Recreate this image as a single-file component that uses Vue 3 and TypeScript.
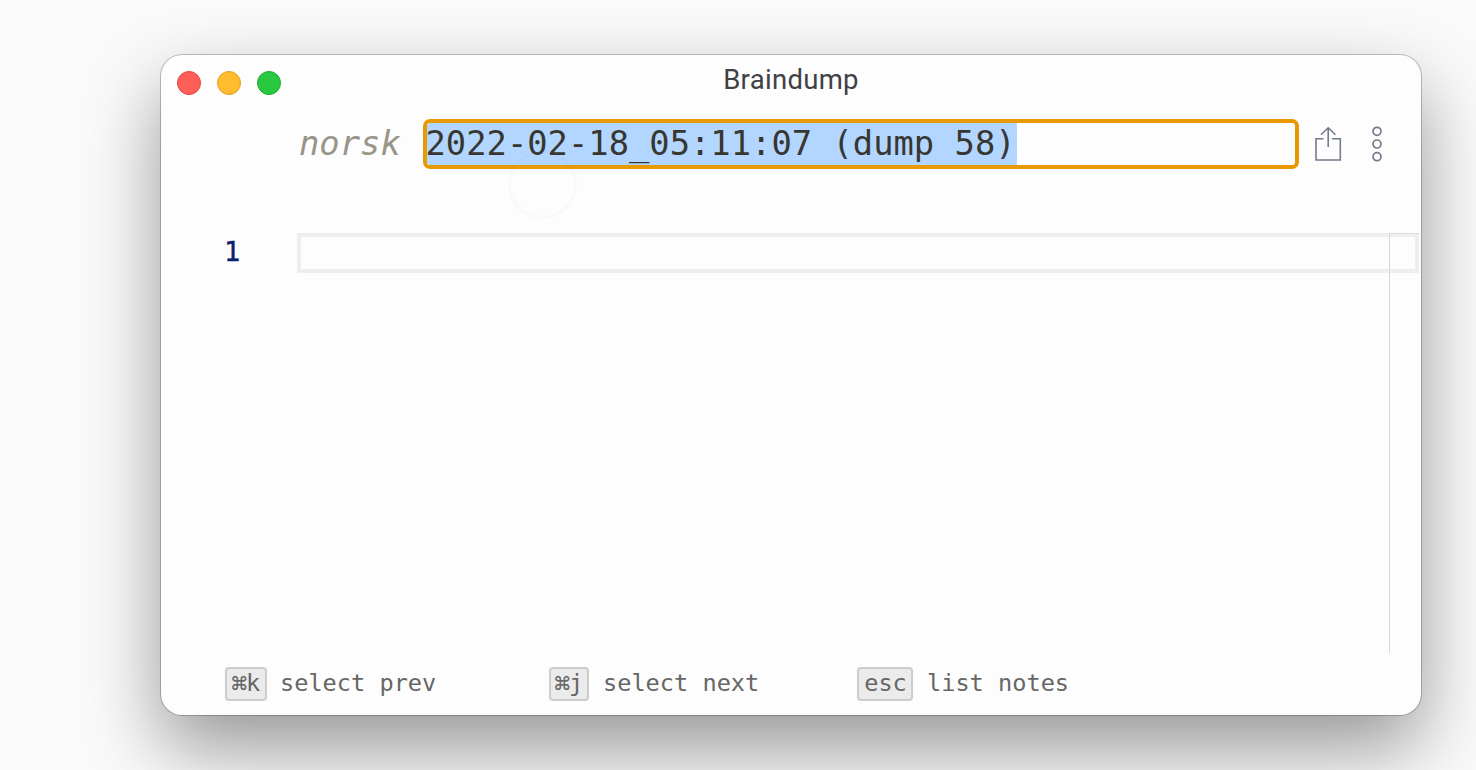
<script setup lang="ts">
interface Hint {
  symbol: string
  key: string
  label: string
  id: string
}

const lights: string[] = ['close', 'minimize', 'zoom']
const title = 'Braindump'
const language = 'norsk'
const noteName = '2022-02-18_05:11:07 (dump 58)'
const hints: Hint[] = [
  { symbol: '⌘', key: 'k', label: 'select prev', id: 'prev' },
  { symbol: '⌘', key: 'j', label: 'select next', id: 'next' },
  { symbol: '', key: 'esc', label: 'list notes', id: 'list' },
]
</script>

<template>
  <div class="desktop">
    <main class="window">
      <header class="titlebar">
        <div class="lights">
          <span v-for="light in lights" :key="light" class="light" :class="light" />
        </div>
        <h1 class="title"><span>{{ title }}</span></h1>
      </header>

      <section class="namebar">
        <span class="language">{{ language }}</span>
        <div class="name-field"><span class="selection">{{ noteName }}</span></div>
        <svg class="share" width="30" height="38" viewBox="0 0 30 38" fill="none" stroke="#747b8b" stroke-width="1.6">
          <path d="M10.6 13.8H3V35H27.3V13.8H18.9M15.2 22V3M8 9.8L15.2 2.8L22.4 9.8" />
        </svg>
        <svg class="more" width="14" height="38" viewBox="0 0 14 38" fill="none" stroke="#747b8b" stroke-width="1.7">
          <circle cx="7" cy="6.3" r="4" />
          <circle cx="7" cy="19" r="4" />
          <circle cx="7" cy="31.7" r="4" />
        </svg>
        <span class="ripple" />
      </section>

      <section class="editor">
        <div class="gutter">1</div>
        <div class="code">
          <div class="active-line" />
          <div class="overview" />
        </div>
      </section>

      <footer class="hints">
        <div v-for="hint in hints" :key="hint.id" class="hint" :class="hint.id">
          <kbd><span v-if="hint.symbol" class="symbol">{{ hint.symbol }}</span><span class="key">{{ hint.key }}</span></kbd>
          <span class="label">{{ hint.label }}</span>
        </div>
      </footer>
    </main>
  </div>
</template>

<style>
body {
  margin: 0;
  background: #fafafa;
}
</style>

<style scoped>
.desktop {
  box-sizing: border-box;
  width: 1476px;
  height: 770px;
  padding: 55px 0 0 161px;
  overflow: hidden;
  background: #fafafa;
  font-family: 'DejaVu Sans Mono', monospace;
}
.window {
  display: flex;
  flex-direction: column;
  width: 1260px;
  height: 660px;
  border-radius: 21px;
  background: #fdfdfd;
  box-shadow: 0 0 0 1px rgba(0, 0, 0, 0.22), 0 33px 76px rgba(0, 0, 0, 0.4);
}
.titlebar {
  display: grid;
  grid-template-columns: 120px 1fr 120px;
  height: 64px;
}
.lights {
  display: flex;
  gap: 16px;
  padding: 16px 0 0 16px;
}
.light {
  box-sizing: border-box;
  width: 24px;
  height: 24px;
  border-radius: 50%;
}
.close {
  background: #ff5f57;
  border: 1px solid #e2463f;
}
.minimize {
  background: #febc2e;
  border: 1px solid #dfa023;
}
.zoom {
  background: #28c840;
  border: 1px solid #1dac2b;
}
.title {
  margin: 0;
  padding-top: 9px;
  text-align: center;
  font: 400 27.5px/32px Roboto, sans-serif;
  letter-spacing: 0.3px;
  color: #404145;
}
.namebar {
  position: relative;
  display: flex;
  align-items: center;
  height: 50px;
  padding-left: 138px;
}
.language {
  width: 124px;
  font-size: 33.8px;
  line-height: 42px;
  font-style: italic;
  color: #99958a;
}
.name-field {
  box-sizing: border-box;
  width: 876px;
  height: 50px;
  border: 4px solid #e89800;
  border-radius: 7px;
  background: #fefefe;
  overflow: hidden;
}
.selection {
  display: block;
  width: 590px;
  height: 42px;
  font-size: 33.8px;
  line-height: 42px;
  text-indent: -1.5px;
  white-space: pre;
  background: #b2d6ff;
  color: #383630;
}
.share {
  margin-left: 14px;
}
.more {
  margin-left: 27px;
}
.ripple {
  position: absolute;
  left: 347px;
  top: 31px;
  box-sizing: border-box;
  width: 69px;
  height: 69px;
  border: 3px solid rgba(130, 130, 210, 0.03);
  border-radius: 50%;
}
.editor {
  display: flex;
  height: 420px;
  margin-top: 64px;
}
.gutter {
  width: 136px;
  box-sizing: border-box;
  padding-left: 63px;
  font-size: 27px;
  line-height: 38px;
  color: #0b216f;
  -webkit-text-stroke: 0.4px #0b216f;
}
.code {
  position: relative;
  width: 1122px;
}
.active-line {
  box-sizing: border-box;
  height: 40px;
  border: 4px solid #eee;
}
.overview {
  position: absolute;
  top: 0;
  right: 0;
  bottom: 0;
  box-sizing: border-box;
  width: 30px;
  border-left: 1px solid #d6d6d6;
  border-top: 1px solid #dcdcdc;
}
.hints {
  display: flex;
  padding: 14px 0 0 64px;
  color: #666;
  font-size: 23.6px;
}
.hint {
  display: flex;
  align-items: center;
  height: 34px;
}
.prev {
  width: 324px;
}
.next {
  width: 308px;
}
kbd {
  box-sizing: border-box;
  display: flex;
  justify-content: center;
  height: 34px;
  border: 2px solid #ccc;
  border-radius: 4px;
  background: #ebebeb;
  font: inherit;
  line-height: 29px;
}
.prev kbd {
  width: 42px;
}
.next kbd {
  width: 40px;
}
.list kbd {
  width: 56px;
  text-indent: 1px;
}
.symbol {
  width: 17px;
  margin-left: -2px;
  font-family: 'DejaVu Sans', sans-serif;
  font-size: 18.5px;
  -webkit-text-stroke: 0.2px #666;
}
.key {
  margin-left: -1px;
}
.list .key {
  margin-left: 0;
}
.label {
  margin-left: 14px;
  height: 34px;
  line-height: 32px;
  white-space: pre;
}
.prev .label {
  margin-left: 13px;
}
</style>
